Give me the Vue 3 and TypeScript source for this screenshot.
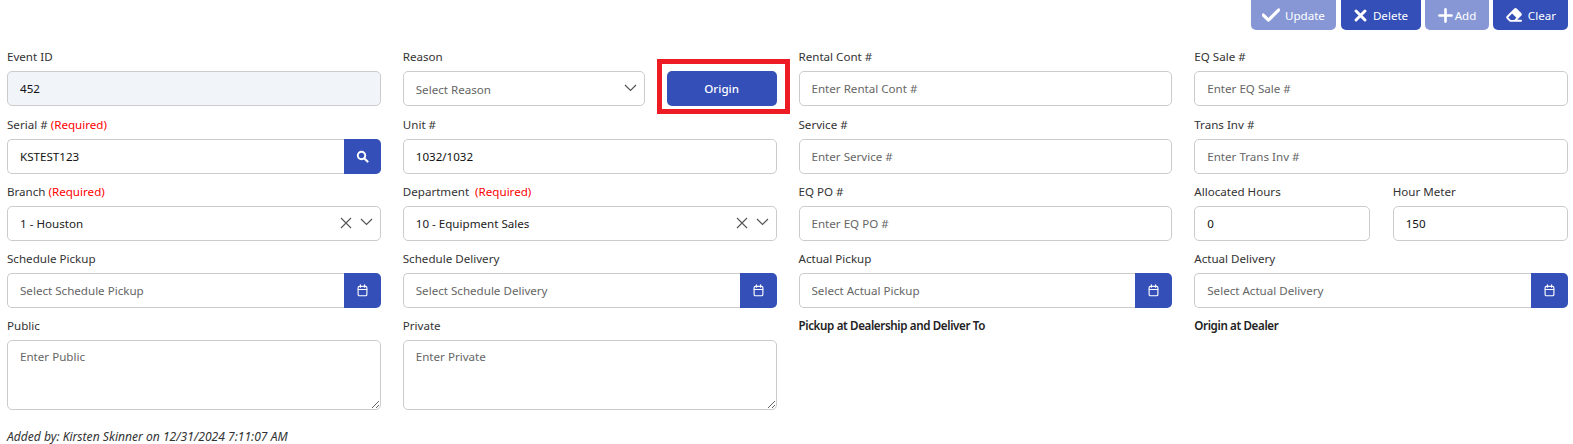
<script setup lang="ts">
type Kind = 'input' | 'disabled' | 'search' | 'select' | 'clearable' | 'date' | 'area' | 'text' | 'reason' | 'pair'
interface Field {
  label: string
  kind: Kind
  value?: string
  placeholder?: string
  required?: boolean
  pair?: { label: string; value: string }[]
}

const buttons = [
  { label: 'Update', icon: 'check', faded: true },
  { label: 'Delete', icon: 'x', faded: false },
  { label: 'Add', icon: 'plus', faded: true },
  { label: 'Clear', icon: 'eraser', faded: false },
]

const fields: Field[] = [
  { label: 'Event ID', kind: 'disabled', value: '452' },
  { label: 'Reason', kind: 'reason', placeholder: 'Select Reason' },
  { label: 'Rental Cont #', kind: 'input', placeholder: 'Enter Rental Cont #' },
  { label: 'EQ Sale #', kind: 'input', placeholder: 'Enter EQ Sale #' },
  { label: 'Serial #', kind: 'search', value: 'KSTEST123', required: true },
  { label: 'Unit #', kind: 'input', value: '1032/1032' },
  { label: 'Service #', kind: 'input', placeholder: 'Enter Service #' },
  { label: 'Trans Inv #', kind: 'input', placeholder: 'Enter Trans Inv #' },
  { label: 'Branch', kind: 'clearable', value: '1 - Houston', required: true },
  { label: 'Department', kind: 'clearable', value: '10 - Equipment Sales', required: true },
  { label: 'EQ PO #', kind: 'input', placeholder: 'Enter EQ PO #' },
  {
    label: '',
    kind: 'pair',
    pair: [
      { label: 'Allocated Hours', value: '0' },
      { label: 'Hour Meter', value: '150' },
    ],
  },
  { label: 'Schedule Pickup', kind: 'date', placeholder: 'Select Schedule Pickup' },
  { label: 'Schedule Delivery', kind: 'date', placeholder: 'Select Schedule Delivery' },
  { label: 'Actual Pickup', kind: 'date', placeholder: 'Select Actual Pickup' },
  { label: 'Actual Delivery', kind: 'date', placeholder: 'Select Actual Delivery' },
  { label: 'Public', kind: 'area', placeholder: 'Enter Public' },
  { label: 'Private', kind: 'area', placeholder: 'Enter Private' },
  { label: 'Pickup at Dealership and Deliver To', kind: 'text' },
  { label: 'Origin at Dealer', kind: 'text' },
]
</script>

<template>
  <div class="page">
    <div class="toolbar">
      <button v-for="b in buttons" :key="b.label" class="tool" :class="[b.icon, { faded: b.faded }]" type="button">
        <svg v-if="b.icon === 'check'" class="ti" viewBox="0 80 448 350"><path fill="currentColor" stroke="currentColor" stroke-width="24" d="M438.6 105.4c12.5 12.5 12.5 32.8 0 45.3l-256 256c-12.5 12.5-32.8 12.5-45.3 0l-128-128c-12.5-12.5-12.5-32.8 0-45.3s32.8-12.5 45.3 0L160 338.7 393.4 105.4c12.5-12.5 32.8-12.5 45.3 0z" /></svg>
        <svg v-else-if="b.icon === 'x'" class="ti" viewBox="0 0 16 16"><path d="M2.5 2.5l11 11M13.5 2.5l-11 11" stroke="currentColor" stroke-width="3.6" stroke-linecap="round" fill="none" /></svg>
        <svg v-else-if="b.icon === 'plus'" class="ti" viewBox="0 0 16 16"><path d="M8 1.5v13M1.5 8h13" stroke="currentColor" stroke-width="2.8" stroke-linecap="round" fill="none" /></svg>
        <svg v-else class="ti" viewBox="0 40 576 440"><path fill="currentColor" d="M290.7 57.4L57.4 290.7c-25 25-25 65.5 0 90.5l80 80c12 12 28.3 18.7 45.3 18.7H288h9.4H512c17.7 0 32-14.3 32-32s-14.3-32-32-32H387.9L518.6 285.3c25-25 25-65.5 0-90.5L381.3 57.4c-25-25-65.5-25-90.5 0zM297.4 416H288l-105.4 0-80-80L227.3 211.3 364.7 348.7 297.4 416z" /></svg>
        <span>{{ b.label }}</span>
      </button>
    </div>

    <div class="grid">
      <div v-for="f in fields" :key="f.label || 'pair'" class="field" :class="{ 'area-field': f.kind === 'area' }">
        <template v-if="f.kind === 'pair'">
          <div class="pair">
            <div v-for="p in f.pair" :key="p.label" class="field">
              <label class="label">{{ p.label }}</label>
              <input class="control" :value="p.value" />
            </div>
          </div>
        </template>
        <template v-else>
          <label class="label" :class="{ strong: f.kind === 'text' }">
            {{ f.label }}
            <span v-if="f.required" class="req" :class="{ wide: f.label === 'Department' }">(Required)</span>
          </label>

          <input v-if="f.kind === 'input'" class="control" :value="f.value" :placeholder="f.placeholder" />
          <input v-else-if="f.kind === 'disabled'" class="control disabled" :value="f.value" disabled />

          <div v-else-if="f.kind === 'search'" class="group">
            <input class="control joined" :value="f.value" />
            <button class="addon" type="button">
              <svg class="ai" viewBox="0 0 16 16"><circle cx="6.8" cy="6.8" r="4.6" fill="none" stroke="currentColor" stroke-width="2.4" /><path d="M10.4 10.4l3.8 3.8" stroke="currentColor" stroke-width="2.6" stroke-linecap="round" /></svg>
            </button>
          </div>

          <div v-else-if="f.kind === 'date'" class="group">
            <input class="control joined" :placeholder="f.placeholder" />
            <button class="addon" type="button">
              <svg class="ai" viewBox="0 0 14 16"><rect x="1.6" y="3" width="10.8" height="11.4" rx="1.6" fill="none" stroke="currentColor" stroke-width="1.4" /><path d="M1.6 6.8h10.8M4.4 1v3M9.6 1v3" stroke="currentColor" stroke-width="1.4" stroke-linecap="round" fill="none" /></svg>
            </button>
          </div>

          <div v-else-if="f.kind === 'clearable'" class="control select">
            <span class="select-text">{{ f.value }}</span>
            <svg class="clear" viewBox="0 0 12 12"><path d="M1 1l10 10M11 1L1 11" stroke="currentColor" stroke-width="1.1" fill="none" /></svg>
            <svg class="chev" viewBox="0 0 13 8"><path d="M1 1l5.5 5.5L12 1" stroke="currentColor" stroke-width="1.2" fill="none" /></svg>
          </div>

          <div v-else-if="f.kind === 'reason'" class="reason">
            <div class="control select muted">
              <span class="select-text">{{ f.placeholder }}</span>
              <svg class="chev" viewBox="0 0 13 8"><path d="M1 1l5.5 5.5L12 1" stroke="currentColor" stroke-width="1.2" fill="none" /></svg>
            </div>
            <div class="origin-wrap">
              <button class="origin" type="button">Origin</button>
              <span class="highlight"></span>
            </div>
          </div>

          <textarea v-else-if="f.kind === 'area'" class="control area" :placeholder="f.placeholder"></textarea>
        </template>
      </div>
    </div>

    <p class="audit">Added by: Kirsten Skinner on 12/31/2024 7:11:07 AM</p>
  </div>
</template>

<style scoped>
.page {
  width: 1573px;
  height: 444px;
  box-sizing: border-box;
  padding: 0 5px 0 7px;
  overflow: hidden;
  background: #fff;
  font-family: "Noto Sans", "Open Sans", sans-serif;
  font-size: 11.6px;
  color: #333;
}
.toolbar {
  display: flex;
  justify-content: flex-end;
  gap: 4px;
  height: 30px;
}
.tool {
  display: flex;
  align-items: center;
  gap: 5px;
  height: 30px;
  padding: 0 12px;
  border: 0;
  border-radius: 0 0 5px 5px;
  background: #344fb8;
  color: #fff;
  font: inherit;
}
.tool.faded {
  background: #8797d6;
}
.tool.check {
  margin-right: 1px;
  padding: 0 11px;
}
.tool.x {
  padding: 0 13px;
  gap: 6px;
}
.tool.plus {
  padding: 0 12.5px;
  gap: 2px;
}
.ti {
  flex: none;
  width: 15px;
  height: 15px;
}
.check .ti {
  width: 18px;
  height: 14px;
}
.x .ti {
  width: 13px;
  height: 13px;
}
.eraser .ti {
  width: 18px;
  height: 14px;
}
.grid {
  display: grid;
  grid-template-columns: repeat(4, 1fr);
  column-gap: 22px;
  margin-top: 19.25px;
}
.field {
  display: flex;
  flex-direction: column;
  min-width: 0;
}
.label {
  display: block;
  height: 22px;
  line-height: 16px;
  color: #333;
  white-space: nowrap;
}
.strong {
  font-weight: 600;
  letter-spacing: -0.37px;
  color: #222;
}
.req {
  color: #f00;
}
.req.wide {
  margin-left: 3px;
}
.control {
  box-sizing: border-box;
  width: 100%;
  height: 35px;
  margin-bottom: 10.25px;
  padding: 0 12px;
  border: 1px solid #ccc;
  border-radius: 5px;
  background: #fff;
  color: #111;
  font: inherit;
  outline: none;
}
.control::placeholder {
  color: #666;
  opacity: 1;
}
.disabled {
  background: #f1f4f8;
}
.group {
  display: flex;
}
.joined {
  flex: 1;
  min-width: 0;
  border-right: 0;
  border-radius: 5px 0 0 5px;
}
.addon {
  flex: none;
  display: flex;
  align-items: center;
  justify-content: center;
  width: 37px;
  height: 35px;
  padding: 0;
  border: 0;
  border-radius: 0 5px 5px 0;
  background: #344fb8;
  color: #fff;
}
.ai {
  width: 13px;
  height: 13px;
}
.select {
  display: flex;
  align-items: center;
  padding-right: 7px;
  color: #222;
}
.muted {
  color: #666;
}
.select-text {
  flex: 1;
  padding-top: 1px;
}
.clear {
  width: 12px;
  height: 12px;
  margin-right: 8px;
  color: #555;
}
.chev {
  width: 13px;
  height: 8px;
  margin-top: -2px;
  color: #555;
}
.reason {
  display: grid;
  grid-template-columns: 242px 1fr;
  column-gap: 22px;
}
.origin-wrap {
  position: relative;
  height: 35px;
}
.origin {
  width: 100%;
  height: 35px;
  border: 0;
  border-radius: 5px;
  background: #344fb8;
  color: #fff;
  font: inherit;
  font-weight: 500;
}
.highlight {
  position: absolute;
  top: -12px;
  bottom: -8px;
  left: -10px;
  right: -13px;
  box-sizing: border-box;
  border: 5px solid #ed1c24;
  pointer-events: none;
}
.pair {
  display: grid;
  grid-template-columns: 1fr 1fr;
  column-gap: 23px;
}
.area {
  display: block;
  height: 70px;
  padding-top: 8px;
  margin-bottom: 0;
}
.audit {
  margin: 19.5px 0 0;
  font-size: 12.1px;
  font-style: italic;
  line-height: 14px;
  color: #333;
}
</style>

<style>
html,
body {
  margin: 0;
  background: #fff;
}
</style>
